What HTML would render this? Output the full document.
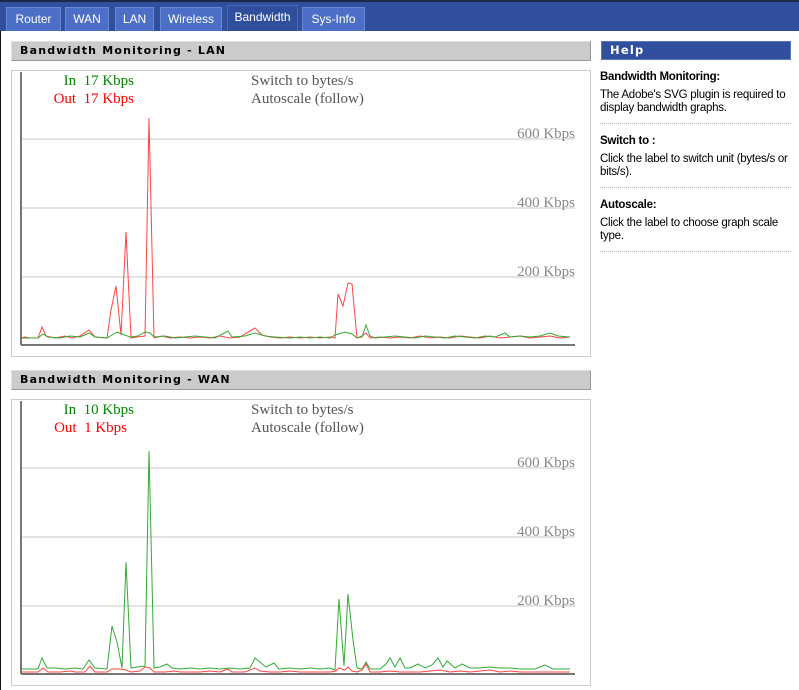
<!DOCTYPE html>
<html><head><meta charset="utf-8"><style>
*{margin:0;padding:0;box-sizing:border-box}
body{width:799px;height:690px;background:#fff;position:relative;overflow:hidden;font-family:"DejaVu Sans","Liberation Sans",sans-serif}
.top{position:absolute;left:0;top:0;width:799px;height:31px;background:#30509e;border-top:2px solid #1c2a4a}
.tab{position:absolute;top:7px;height:24px;background:#4b6fc6;border:1px solid #6a88d4;border-bottom:none;color:#fff;font-size:12px;line-height:22px;text-align:center;font-family:"Liberation Sans",sans-serif}
.tab.act{background:#2f4f9c;top:5px;height:26px;border-color:#4a68b8}
.hdr{position:absolute;left:11px;width:580px;height:20px;background:#cbcbcb;border:1px solid #e0e0e0;border-right-color:#999;border-bottom-color:#999;font-weight:bold;font-size:11px;letter-spacing:1.2px;line-height:18px;padding-left:8px;color:#000}
.box{position:absolute;left:11px;width:580px;height:287px;border:1px solid #ccc}
.help{position:absolute;left:601px;top:41px;width:190px;height:19px;background:#30509e;border:1px solid #5a78c0;color:#fff;font-weight:bold;font-size:11.5px;letter-spacing:1.2px;line-height:17px;padding-left:8px}
.ht{position:absolute;left:600px;width:192px;font-size:11.5px;color:#000;line-height:13px;font-family:"Liberation Sans",sans-serif;letter-spacing:-0.25px}
.ht b{display:block;margin-bottom:5px}
.sep{position:absolute;left:600px;width:191px;border-top:1px dotted #bbb}
svg text{font-family:"Liberation Serif",serif;font-size:15px;white-space:pre}
</style></head><body>
<div style="position:absolute;left:0;top:31px;width:1px;height:659px;background:#111"></div>
<div class="top"></div>
<div class="tab" style="left:6px;width:55px">Router</div>
<div class="tab" style="left:65px;width:44px">WAN</div>
<div class="tab" style="left:115px;width:39px">LAN</div>
<div class="tab" style="left:160px;width:62px">Wireless</div>
<div class="tab act" style="left:227px;width:71px">Bandwidth</div>
<div class="tab" style="left:302px;width:63px">Sys-Info</div>

<div class="hdr" style="top:41px">Bandwidth Monitoring - LAN</div>
<div class="box" style="top:70px"></div>
<div class="hdr" style="top:370px">Bandwidth Monitoring - WAN</div>
<div class="box" style="top:399px"></div>

<svg style="position:absolute;left:0;top:0" width="799" height="690" xml:space="preserve">
<g>
<line x1="21" y1="139" x2="575" y2="139" stroke="#c8c8c8"/>
<line x1="21" y1="208" x2="575" y2="208" stroke="#c8c8c8"/>
<line x1="21" y1="277" x2="575" y2="277" stroke="#c8c8c8"/>
<line x1="21" y1="72" x2="21" y2="345" stroke="#777" stroke-width="2"/>
<line x1="21" y1="345" x2="575" y2="345" stroke="#777" stroke-width="2"/>
<text x="575" y="138" text-anchor="end" fill="#888">600 Kbps</text>
<text x="575" y="207" text-anchor="end" fill="#888">400 Kbps</text>
<text x="575" y="276" text-anchor="end" fill="#888">200 Kbps</text>
<text x="134" y="85" text-anchor="end" fill="#080">In  17 Kbps</text>
<text x="134" y="103" text-anchor="end" fill="#f00">Out  17 Kbps</text>
<text x="251" y="85" fill="#555">Switch to bytes/s</text>
<text x="251" y="103" fill="#555">Autoscale (follow)</text>
<polyline fill="none" stroke="#f44" stroke-width="1" points="21,338 25,337 30,338 38,338 42,327 46,336 55,338 65,336 72,338 80,336 89,330 95,337 107,338 111,310 116,286 121,335 126,232 131,338 137,337 145,336 149,118 154,338 162,336 170,338 180,337 190,338 200,337 210,338 220,336 230,338 240,337 255,328 262,335 270,337 280,338 290,337 300,338 310,337 320,338 330,337 335,338 338,294 343,306 348,283 352,284 357,338 362,336 366,333 370,338 380,337 390,338 400,337 410,338 420,336 430,338 440,337 450,338 460,336 470,337 480,338 490,336 500,338 510,337 520,336 530,338 540,337 550,336 560,338 570,337"/>
<polyline fill="none" stroke="#3a3" stroke-width="1" points="21,338 30,338 38,338 43,334 48,337 60,338 70,336 80,337 89,333 95,337 107,338 112,335 117,332 122,334 130,337 138,336 145,332 150,333 154,337 165,336 175,338 185,337 195,336 205,337 215,338 228,331 232,337 245,336 255,333 265,336 275,337 290,338 300,337 310,338 320,337 330,338 335,335 345,332 352,334 357,338 362,337 366,325 370,336 375,338 385,337 395,336 405,337 415,338 425,336 435,337 445,338 455,336 465,337 475,338 485,336 495,337 505,333 510,337 520,336 530,337 540,336 550,333 558,336 570,337"/>
</g>
<g>
<line x1="21" y1="468" x2="575" y2="468" stroke="#c8c8c8"/>
<line x1="21" y1="537" x2="575" y2="537" stroke="#c8c8c8"/>
<line x1="21" y1="606" x2="575" y2="606" stroke="#c8c8c8"/>
<line x1="21" y1="401" x2="21" y2="674" stroke="#777" stroke-width="2"/>
<line x1="21" y1="674" x2="575" y2="674" stroke="#777" stroke-width="2"/>
<text x="575" y="467" text-anchor="end" fill="#888">600 Kbps</text>
<text x="575" y="536" text-anchor="end" fill="#888">400 Kbps</text>
<text x="575" y="605" text-anchor="end" fill="#888">200 Kbps</text>
<text x="134" y="414" text-anchor="end" fill="#080">In  10 Kbps</text>
<text x="127" y="432" text-anchor="end" fill="#f00">Out  1 Kbps</text>
<text x="251" y="414" fill="#555">Switch to bytes/s</text>
<text x="251" y="432" fill="#555">Autoscale (follow)</text>
<polyline fill="none" stroke="#3a3" stroke-width="1" points="21,669 38,669 42,658 47,668 55,668 65,669 75,668 83,669 89,660 95,668 107,669 112,626 117,642 122,668 126,562 131,668 137,667 145,666 149,451 154,668 160,667 167,664 172,668 180,669 190,668 200,669 210,668 220,669 230,668 240,669 250,668 255,658 261,663 266,667 274,663 279,669 290,668 300,669 310,668 320,669 330,668 335,670 339,599 344,666 348,594 353,640 357,668 362,669 366,662 370,669 380,669 386,664 390,658 395,667 400,658 405,668 410,668 418,664 425,668 432,665 438,658 443,667 447,661 455,668 462,664 470,668 480,668 490,667 500,668 510,668 520,669 535,669 545,665 553,669 560,669 570,669"/>
<polyline fill="none" stroke="#f44" stroke-width="1" points="21,672 38,672 43,668 48,672 60,672 70,671 75,672 85,672 90,666 95,672 107,672 112,669 120,669 126,670 131,672 140,671 145,667 150,668 154,672 165,672 175,671 180,672 190,672 200,672 210,671 220,672 228,669 232,672 245,672 255,668 260,671 270,672 280,672 290,671 300,672 315,672 330,672 336,671 339,668 345,670 348,667 352,671 357,672 362,670 366,664 370,672 380,672 390,671 400,672 410,672 420,672 430,671 440,670 450,672 460,671 470,672 480,671 490,670 500,672 510,671 520,672 535,672 550,672 570,672"/>
</g>
</svg>

<div class="help">Help</div>
<div class="ht" style="top:71px"><b>Bandwidth Monitoring:</b>The Adobe's SVG plugin is required to display bandwidth graphs.</div>
<div class="sep" style="top:123px"></div>
<div class="ht" style="top:135px"><b>Switch to :</b>Click the label to switch unit (bytes/s or bits/s).</div>
<div class="sep" style="top:187px"></div>
<div class="ht" style="top:199px"><b>Autoscale:</b>Click the label to choose graph scale type.</div>
<div class="sep" style="top:251px"></div>
</body></html>
